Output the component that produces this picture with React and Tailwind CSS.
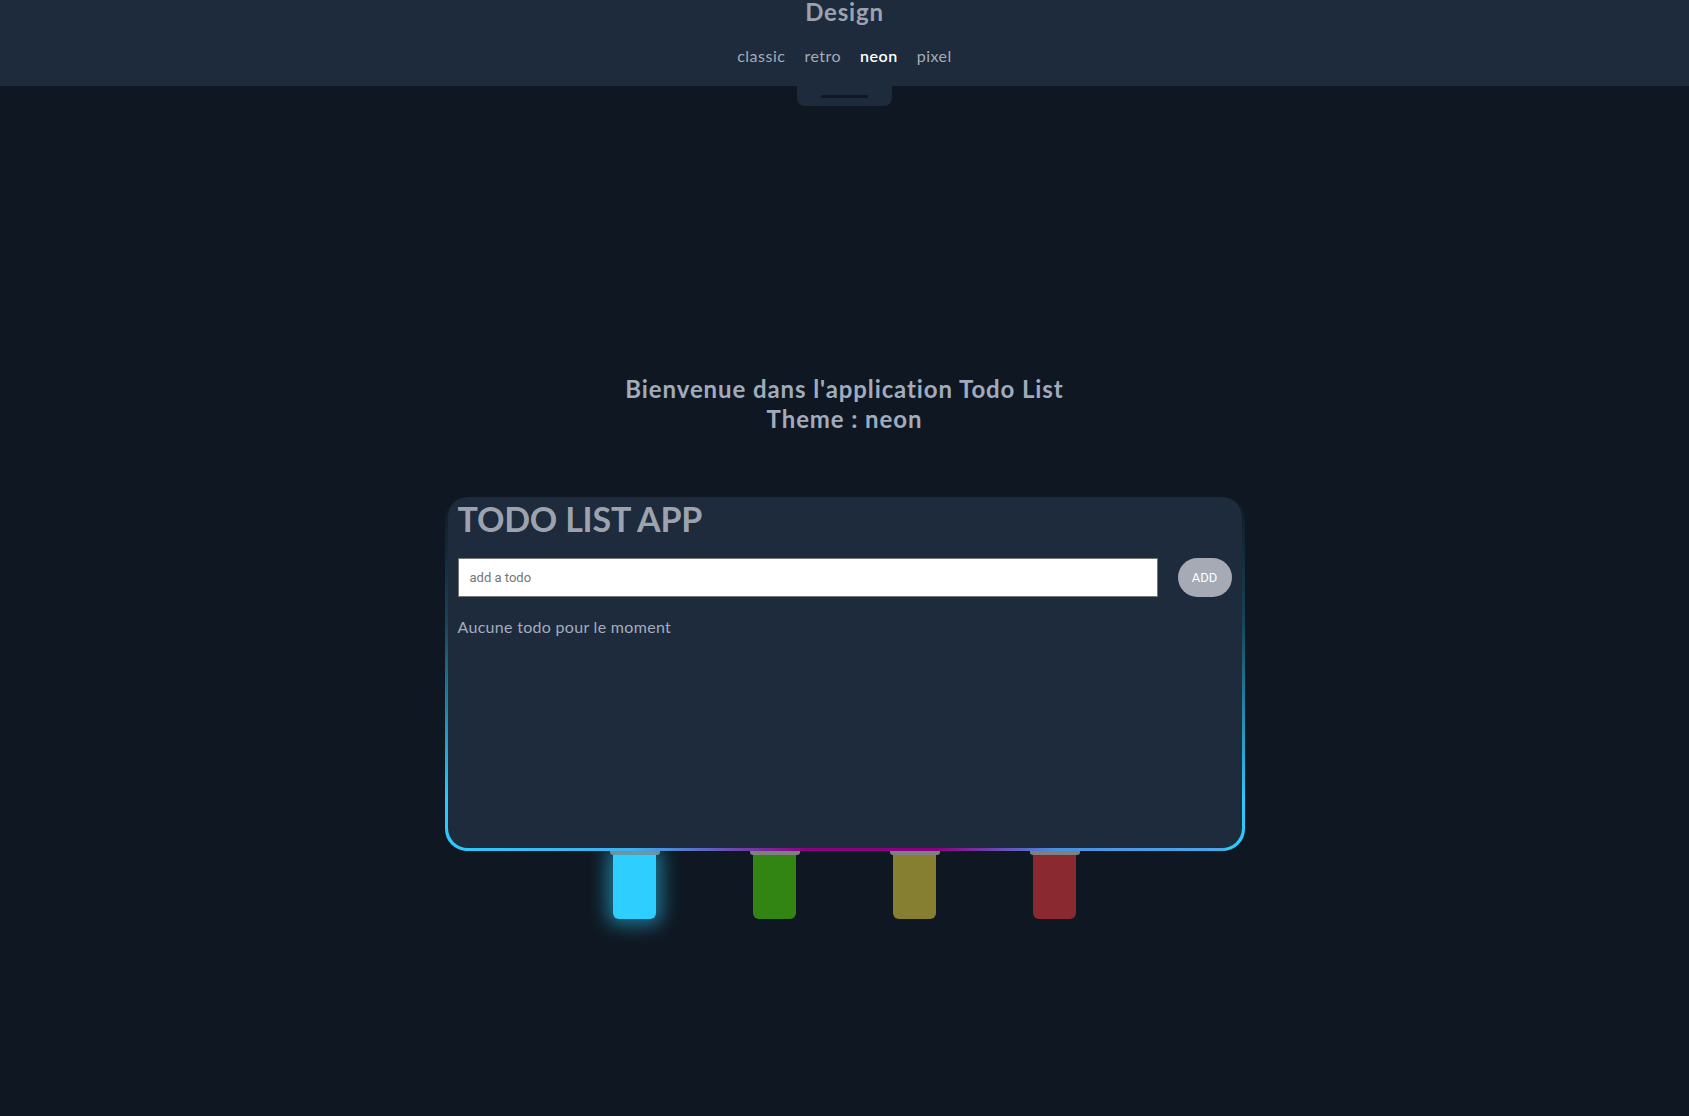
import React, { useState } from "react";

const themes = ["classic", "retro", "neon", "pixel"];

const lights = [
  { color: "bg-[#2ecfff]", glow: true },
  { color: "bg-[#338513]", glow: false },
  { color: "bg-[#867f31]", glow: false },
  { color: "bg-[#8a2a30]", glow: false },
];

const App = () => {
  const [todo, setTodo] = useState("");
  const theme = "neon";

  return (
    <div
      className="min-h-screen bg-[#0f1822] text-[#9ca3af]"
      style={{ fontFamily: "Lato, 'Noto Sans', sans-serif" }}
    >
      <header className="h-[86px] bg-[#1e2b3c] flex flex-col items-center">
        <h1 className="text-[24px] leading-[24px] font-bold tracking-[0.8px] text-[#9ca3af]">
          Design
        </h1>
        <nav className="mt-[20px] flex gap-[19px] text-[16px] leading-[24px] tracking-[0.5px]">
          {themes.map((t) => (
            <button
              key={t}
              className={t === theme ? "text-white font-semibold" : "text-[#a3acb9]"}
            >
              {t}
            </button>
          ))}
        </nav>
      </header>

      <div className="flex justify-center">
        <div className="w-[95px] h-[20px] bg-[#1e2b3c] rounded-b-lg flex justify-center pt-[9px]">
          <div className="w-[47px] h-[3px] rounded-full bg-[#0f1822]" />
        </div>
      </div>

      <main className="flex flex-col items-center pt-[268px]">
        <h2 className="text-[24px] leading-[30px] font-bold tracking-[0.9px] text-center text-[#a0abbd]">
          Bienvenue dans l'application Todo List
          <br />
          Theme : {theme}
        </h2>

        <div className="relative mt-[63px] w-[800px] h-[354px] rounded-[22px] px-[3px] pb-[3px] bg-[linear-gradient(to_bottom,rgba(46,200,250,0)_0%,rgba(46,200,250,0.25)_35%,#2ec8fa_85%)]">
          <div className="absolute left-[20px] right-[20px] bottom-0 h-[3px] bg-[linear-gradient(to_right,#2ec8fa_0%,#3eb0ee_22%,#8b0080_45%,#8b0080_62%,#4a90e0_78%,#48aaea_100%)]" />
          <div className="relative h-full rounded-[20px] bg-[#1e2b3c] px-[10px]">
            <h1 className="pt-[2px] text-[34px] leading-[40px] font-bold tracking-[-0.2px] text-[#9ca3af]">
              TODO LIST APP
            </h1>
            <div className="mt-[19px] flex gap-[20px]">
              <input
                value={todo}
                onChange={(e) => setTodo(e.target.value)}
                placeholder="add a todo"
                className="w-[700px] h-[39px] bg-white border border-[#767676] px-[11px] text-[13px] text-[#333] placeholder:text-[#757575] outline-none"
                style={{ fontFamily: "Roboto, sans-serif" }}
              />
              <button
                className="w-[54px] h-[39px] rounded-full bg-[#a5aab5] text-white text-[13px]"
                style={{ fontFamily: "Roboto, sans-serif" }}
              >
                ADD
              </button>
            </div>
            <p className="mt-[18px] text-[16px] leading-[24px] tracking-[0.3px] text-[#a3adbd]">
              Aucune todo pour le moment
            </p>
          </div>
        </div>

        <div className="flex gap-[90px]">
          {lights.map((l, i) => (
            <div key={i} className="flex flex-col items-center w-[50px]">
              <div className="w-[50px] h-[4px] bg-[#808080] rounded-b-[3px]" />
              <div
                className={`w-[43px] h-[64px] rounded-b-[6px] ${l.color} ${
                  l.glow ? "shadow-[0_0_18px_6px_rgba(46,207,255,0.5)]" : ""
                }`}
              />
            </div>
          ))}
        </div>
      </main>
    </div>
  );
};

export default App;
